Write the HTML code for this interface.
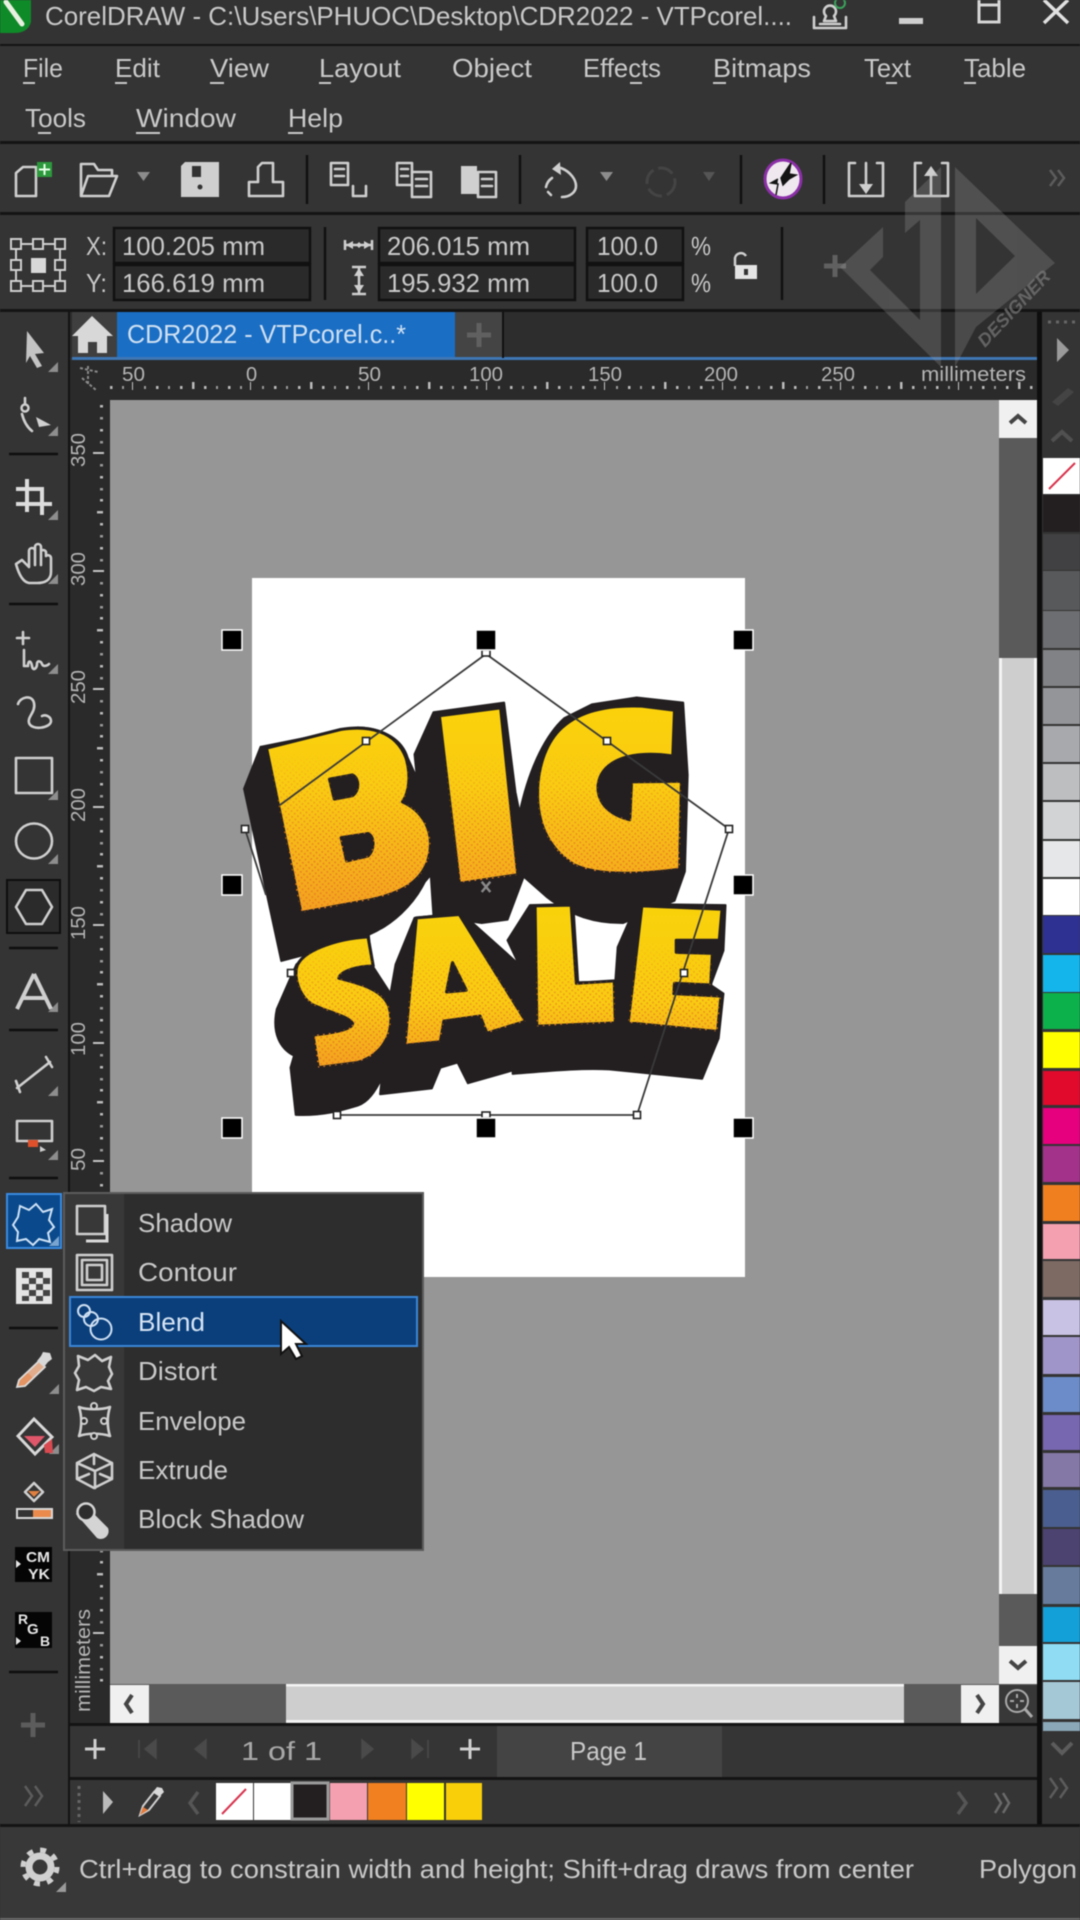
<!DOCTYPE html>
<html lang="en"><head><meta charset="utf-8"><title>CorelDRAW</title>
<style>
html,body{margin:0;padding:0;background:#343434;width:1080px;height:1920px;overflow:hidden}
svg{display:block;filter:blur(.6px)}
text{font-family:"Liberation Sans",sans-serif;fill:#c9c9c9;font-size:26px}
.ic{fill:none;stroke:#cfcfcf;stroke-width:2.6;stroke-linejoin:round;stroke-linecap:round}
.sm{font-size:20px;fill:#b5b5b5}
</style></head><body>
<svg xmlns="http://www.w3.org/2000/svg" width="1080" height="1920" viewBox="0 0 1080 1920">
<defs>
<linearGradient id="gb" gradientUnits="userSpaceOnUse" x1="0" y1="250" x2="0" y2="850"><stop offset="0" stop-color="#fbd20b"/><stop offset=".4" stop-color="#f9cb12"/><stop offset="1" stop-color="#f3a020"/></linearGradient>
<linearGradient id="gs" gradientUnits="userSpaceOnUse" x1="0" y1="830" x2="0" y2="1300"><stop offset="0" stop-color="#f9d20b"/><stop offset=".6" stop-color="#f9cb12"/><stop offset="1" stop-color="#f3a020"/></linearGradient>
<linearGradient id="fb" gradientUnits="userSpaceOnUse" x1="0" y1="380" x2="0" y2="700"><stop offset="0" stop-color="#000"/><stop offset=".4" stop-color="#777"/><stop offset="1" stop-color="#fff"/></linearGradient>
<linearGradient id="fs" gradientUnits="userSpaceOnUse" x1="0" y1="930" x2="0" y2="1230"><stop offset="0" stop-color="#000"/><stop offset=".4" stop-color="#888"/><stop offset="1" stop-color="#fff"/></linearGradient>
<mask id="mb" maskUnits="userSpaceOnUse" x="0" y="0" width="1600" height="1600"><rect width="1600" height="1600" fill="url(#fb)"/></mask>
<mask id="ms" maskUnits="userSpaceOnUse" x="0" y="0" width="1600" height="1600"><rect width="1600" height="1600" fill="url(#fs)"/></mask>
<pattern id="ht" patternUnits="userSpaceOnUse" width="17" height="17" patternTransform="rotate(-6)"><circle cx="4" cy="4" r="2.800" fill="#e97f22"/><circle cx="12.500" cy="12.500" r="2.800" fill="#e97f22"/></pattern>
<pattern id="rh" patternUnits="userSpaceOnUse" x="15" y="0" width="118" height="20"><rect x="117" y="0" width="2" height="10" fill="#c4c4c4"/><rect x="23" y="6" width="2.500" height="3" fill="#bbb"/><rect x="47" y="6" width="2.500" height="3" fill="#bbb"/><rect x="59" y="2" width="2.500" height="7" fill="#bbb"/><rect x="71" y="6" width="2.500" height="3" fill="#bbb"/><rect x="95" y="6" width="2.500" height="3" fill="#bbb"/><rect x="11" y="6" width="2" height="3" fill="#999"/><rect x="35" y="6" width="2" height="3" fill="#999"/><rect x="83" y="6" width="2" height="3" fill="#999"/><rect x="107" y="6" width="2" height="3" fill="#999"/></pattern>
<pattern id="rv" patternUnits="userSpaceOnUse" x="93" y="452" width="14" height="118"><rect x="0" y="0" width="11" height="2" fill="#c4c4c4"/><rect x="7" y="12" width="3" height="2.500" fill="#999"/><rect x="7" y="24" width="3" height="2.500" fill="#bbb"/><rect x="7" y="36" width="3" height="2.500" fill="#999"/><rect x="7" y="47" width="3" height="2.500" fill="#bbb"/><rect x="4" y="59" width="6" height="2.500" fill="#bbb"/><rect x="7" y="71" width="3" height="2.500" fill="#bbb"/><rect x="7" y="83" width="3" height="2.500" fill="#999"/><rect x="7" y="95" width="3" height="2.500" fill="#bbb"/><rect x="7" y="107" width="3" height="2.500" fill="#999"/></pattern>
<path id="lB" fill-rule="evenodd" d="M135 372L350 318C430 305 510 320 540 400C555 450 550 500 530 528C590 555 618 610 610 670C600 750 540 790 440 812L235 850ZM318 462L332 520L385 510C405 495 405 460 385 450ZM352 632L368 700L430 685C450 665 448 630 430 620Z"/>
<path id="lI" d="M637 278L815 255L865 740L695 765Z"/>
<path id="lG" d="M1320 262L1225 250C1100 245 1030 275 985 320C945 362 922 430 922 505C922 600 960 670 1030 712C1100 745 1230 738 1335 724L1340 468L1195 470L1190 580C1130 565 1095 530 1098 480C1105 420 1170 375 1315 395Z"/>
<path id="lS" d="M222 1010C235 960 340 925 430 920L445 1005C400 1005 350 1020 345 1040C400 1055 470 1070 490 1120C510 1190 480 1260 400 1285L285 1300L270 1205C320 1200 385 1190 385 1172C375 1150 300 1135 265 1115C235 1095 215 1050 222 1010Z"/>
<path id="lA" fill-rule="evenodd" d="M570 865L695 855L888 1165L775 1200L755 1150L650 1165L640 1225L537 1235ZM675 995L658 1080L715 1075Z"/>
<path id="lL" d="M915 830L1020 828L1035 1055L1145 1048L1148 1170L920 1180Z"/>
<path id="lE" d="M1225 830L1458 840L1450 930L1325 930L1325 965L1430 968L1425 1060L1320 1055L1318 1085L1455 1092L1445 1195L1185 1170Z"/>
</defs>

<rect width="1080" height="1920" fill="#343434"/>

<!-- title bar -->
<rect width="1080" height="44" fill="#333"/>
<path d="M0 0H31V22Q28 33 14 33H0Z" fill="#0f8a28"/>
<path d="M6 2L22 24" stroke="#e8f0e0" stroke-width="5" stroke-linecap="round"/>
<text x="45" y="25" textLength="747" lengthAdjust="spacingAndGlyphs">CorelDRAW - C:\Users\PHUOC\Desktop\CDR2022 - VTPcorel....</text>
<path class="ic" d="M814 17v11h32V17M820 24h20M826 16a6 6 0 1 1 8 0l2 5h-12z"/>
<circle cx="840" cy="3" r="5" fill="none" stroke="#3aa35a" stroke-width="2"/>
<rect x="899" y="18" width="24" height="6" fill="#cfcfcf"/>
<path d="M979 0V22H999V0M979 5H999" fill="none" stroke="#d5d5d5" stroke-width="3"/>
<path d="M1044 0L1068 23M1068 0L1044 23" stroke="#e0e0e0" stroke-width="3.500"/>
<rect y="44" width="1080" height="2" fill="#141414"/>

<!-- menu -->
<text x="23" y="77" textLength="40" lengthAdjust="spacingAndGlyphs">File</text>
<text x="115" y="77" textLength="45" lengthAdjust="spacingAndGlyphs">Edit</text>
<text x="210" y="77" textLength="59" lengthAdjust="spacingAndGlyphs">View</text>
<text x="319" y="77" textLength="82" lengthAdjust="spacingAndGlyphs">Layout</text>
<text x="452" y="77" textLength="80" lengthAdjust="spacingAndGlyphs">Object</text>
<text x="583" y="77" textLength="78" lengthAdjust="spacingAndGlyphs">Effects</text>
<text x="713" y="77" textLength="98" lengthAdjust="spacingAndGlyphs">Bitmaps</text>
<text x="864" y="77" textLength="47" lengthAdjust="spacingAndGlyphs">Text</text>
<text x="964" y="77" textLength="62" lengthAdjust="spacingAndGlyphs">Table</text>
<text x="25" y="127" textLength="61" lengthAdjust="spacingAndGlyphs">Tools</text>
<text x="136" y="127" textLength="100" lengthAdjust="spacingAndGlyphs">Window</text>
<text x="288" y="127" textLength="55" lengthAdjust="spacingAndGlyphs">Help</text>
<g fill="#c9c9c9">
<rect x="23" y="82" width="12" height="2"/><rect x="115" y="82" width="12" height="2"/><rect x="210" y="82" width="14" height="2"/><rect x="319" y="82" width="12" height="2"/><rect x="630" y="82" width="12" height="2"/><rect x="713" y="82" width="13" height="2"/><rect x="886" y="82" width="11" height="2"/><rect x="964" y="82" width="12" height="2"/>
<rect x="38" y="132" width="13" height="2"/><rect x="136" y="132" width="24" height="2"/><rect x="288" y="132" width="15" height="2"/>
</g>
<rect y="141" width="1080" height="3" fill="#141414"/>

<!-- standard toolbar -->
<path class="ic" d="M16 196V173l7-6h13v29z"/>
<rect x="37" y="162" width="15" height="15" fill="#2c9a3c"/><path d="M44.500 164v11M39 169.500h11" stroke="#e8ffe8" stroke-width="2"/>
<path class="ic" d="M81 196V164h13l4 6h14v6M81 196l7-20h29l-8 20z"/>
<path d="M137 172h13l-6.500 9z" fill="#8c8c8c"/>
<path d="M181 166l4-4h34v35h-38z" fill="#cfcfcf"/><rect x="192" y="166" width="9" height="11" fill="#333"/><circle cx="200" cy="187" r="2.500" fill="#333"/>
<path class="ic" d="M249 196v-14h9v-15l4-4h11v19h10v14z"/>
<path d="M307 155V204M520 155V204M741 155V204M824 155V204" stroke="#111" stroke-width="2.500"/>
<path class="ic" stroke-width="2" d="M331 163h17v22h-17zM335 169h9M335 176h9M353 186v10h13v-10"/>
<path class="ic" d="M397 163h15v22h-15zM412 172h19v25h-19zM401 169h7M401 176h7M416 179h11M416 186h11"/>
<path d="M461 166h16v28h-16z" fill="#cfcfcf"/><path class="ic" d="M478 172h18v25h-18zM482 179h10M482 186h10"/>
<path class="ic" d="M561 168c10 4 15 12 15 18 0 6-6 11-14 11M552 178a14 14 0 0 0-6 9M548 192l3 3"/>
<path d="M560 162l-8 7 9 6z" fill="#cfcfcf"/>
<path d="M600 172h13l-6.500 9z" fill="#8c8c8c"/>
<circle cx="661" cy="182" r="14" fill="none" stroke="#444" stroke-width="3" stroke-dasharray="16 5"/>
<path d="M703 172h12l-6 9z" fill="#555"/>
<ellipse cx="783" cy="179" rx="18" ry="19" fill="#efe9ef" stroke="#8c2fa8" stroke-width="3"/>
<path d="M791 163l-2 11 7 1-7 4-6 6-2-7zM776 195l2-11-7-1 7-4" fill="#141414" stroke="#141414" stroke-width="1.500"/>
<path class="ic" d="M849 163v33h34v-33h-6M855 163h-6M866 163v24"/><path d="M859 184h14l-7 10z" fill="#cfcfcf"/>
<path class="ic" d="M915 163v33h33v-33h-6M921 163h-6M931 196v-22"/><path d="M924 176h14l-7-10z" fill="#cfcfcf"/>
<path d="M1050 170l6 8-6 8M1058 170l6 8-6 8" fill="none" stroke="#5c5c5c" stroke-width="2.500"/>
<rect y="212" width="1080" height="3" fill="#141414"/>

<!-- property bar -->
<g fill="none" stroke="#cfcfcf" stroke-width="2">
<rect x="11" y="239" width="10" height="10"/><rect x="33" y="239" width="10" height="10"/><rect x="55" y="239" width="10" height="10"/>
<rect x="11" y="260" width="10" height="10"/><rect x="55" y="260" width="10" height="10"/>
<rect x="11" y="281" width="10" height="10"/><rect x="33" y="281" width="10" height="10"/><rect x="55" y="281" width="10" height="10"/>
<path d="M21 244h12M43 244h12M21 286h12M43 286h12M16 249v11M60 249v11M16 270v11M60 270v11"/>
</g>
<rect x="31" y="258" width="15" height="15" fill="#d8d8d8"/>
<text x="86" y="255" textLength="21" lengthAdjust="spacingAndGlyphs">X:</text>
<text x="86" y="292" textLength="21" lengthAdjust="spacingAndGlyphs">Y:</text>
<g fill="#2a2a2a" stroke="#111" stroke-width="2.500">
<rect x="114" y="228" width="196" height="35"/><rect x="114" y="265" width="196" height="35"/>
<rect x="379" y="228" width="196" height="35"/><rect x="379" y="265" width="196" height="35"/>
<rect x="587" y="228" width="96" height="35"/><rect x="587" y="265" width="96" height="35"/>
</g>
<text x="122" y="255" textLength="143" lengthAdjust="spacingAndGlyphs">100.205 mm</text>
<text x="122" y="292" textLength="143" lengthAdjust="spacingAndGlyphs">166.619 mm</text>
<text x="387" y="255" textLength="143" lengthAdjust="spacingAndGlyphs">206.015 mm</text>
<text x="387" y="292" textLength="143" lengthAdjust="spacingAndGlyphs">195.932 mm</text>
<text x="597" y="255" textLength="61" lengthAdjust="spacingAndGlyphs">100.0</text>
<text x="597" y="292" textLength="61" lengthAdjust="spacingAndGlyphs">100.0</text>
<text x="691" y="255" textLength="20" lengthAdjust="spacingAndGlyphs">%</text>
<text x="691" y="292" textLength="20" lengthAdjust="spacingAndGlyphs">%</text>
<path d="M325 227V300M782 227V300" stroke="#111" stroke-width="2.500"/>
<path d="M345 240v10M372 240v10M345 245h27" stroke="#cfcfcf" stroke-width="2.500"/><path d="M346 245l7-4v8zM371 245l-7-4v8zM356 245l3-3 3 3-3 3z" fill="#cfcfcf"/>
<path d="M352 267h14M352 294h14M359 267v27" stroke="#cfcfcf" stroke-width="2.500"/><path d="M359 268l-5 8h10zM359 293l-5-8h10z" fill="#cfcfcf"/>
<path d="M735 266v-8a6 6 0 0 1 11-2" fill="none" stroke="#cfcfcf" stroke-width="2.500"/>
<rect x="735" y="265" width="22" height="14" fill="#e4e4e4"/><rect x="744" y="269" width="4" height="6" fill="#333"/>
<path d="M835 255v22M824 266h22" stroke="#606060" stroke-width="5"/>
<rect y="309" width="1080" height="3" fill="#141414"/>

<!-- left toolbox bg + tab strip -->
<rect x="0" y="312" width="68" height="1513" fill="#343434"/>
<rect x="70" y="312" width="967" height="46" fill="#2d2d2d"/>
<rect x="72" y="312" width="45" height="46" fill="#3f3f3f"/>
<path d="M72 336l20-20 21 20h-6v17h-10v-11h-9v11H78v-17z" fill="#d8d8d8"/>
<rect x="117" y="312" width="338" height="46" fill="#1a6ec4"/>
<text x="127" y="343" textLength="279" lengthAdjust="spacingAndGlyphs" style="fill:#cfe0f2">CDR2022 - VTPcorel.c..*</text>
<rect x="455" y="312" width="48" height="46" fill="#444"/>
<path d="M479 323v24M467 335h24" stroke="#606060" stroke-width="5"/>
<rect x="72" y="357" width="965" height="3" fill="#3f76b4"/>
<rect x="502" y="312" width="2" height="46" fill="#111"/>
<rect x="68" y="312" width="2" height="1513" fill="#131313"/>

<!-- rulers -->
<rect x="70" y="360" width="967" height="40" fill="#2a2a2a"/>
<rect x="70" y="360" width="40" height="1365" fill="#2a2a2a"/>
<rect x="110" y="382" width="927" height="11" fill="url(#rh)"/>
<rect x="93" y="400" width="14" height="1285" fill="url(#rv)"/>
<text class="sm" x="122" y="381" textLength="23" lengthAdjust="spacingAndGlyphs">50</text>
<text class="sm" x="246" y="381">0</text>
<text class="sm" x="358" y="381" textLength="23" lengthAdjust="spacingAndGlyphs">50</text>
<text class="sm" x="469" y="381" textLength="34" lengthAdjust="spacingAndGlyphs">100</text>
<text class="sm" x="588" y="381" textLength="34" lengthAdjust="spacingAndGlyphs">150</text>
<text class="sm" x="704" y="381" textLength="34" lengthAdjust="spacingAndGlyphs">200</text>
<text class="sm" x="821" y="381" textLength="34" lengthAdjust="spacingAndGlyphs">250</text>
<text class="sm" x="921" y="381" textLength="105" lengthAdjust="spacingAndGlyphs">millimeters</text>
<path d="M80 368l18 4M88 366v20M82 378l14 12" stroke="#8a8a8a" stroke-width="2" fill="none" stroke-dasharray="3 2"/>
<text class="sm" transform="translate(85,467) rotate(-90)" textLength="34" lengthAdjust="spacingAndGlyphs">350</text>
<text class="sm" transform="translate(85,586) rotate(-90)" textLength="34" lengthAdjust="spacingAndGlyphs">300</text>
<text class="sm" transform="translate(85,704) rotate(-90)" textLength="34" lengthAdjust="spacingAndGlyphs">250</text>
<text class="sm" transform="translate(85,822) rotate(-90)" textLength="34" lengthAdjust="spacingAndGlyphs">200</text>
<text class="sm" transform="translate(85,940) rotate(-90)" textLength="34" lengthAdjust="spacingAndGlyphs">150</text>
<text class="sm" transform="translate(85,1056) rotate(-90)" textLength="34" lengthAdjust="spacingAndGlyphs">100</text>
<text class="sm" transform="translate(85,1171) rotate(-90)" textLength="23" lengthAdjust="spacingAndGlyphs">50</text>
<text class="sm" transform="translate(90,1712) rotate(-90)" textLength="103" lengthAdjust="spacingAndGlyphs">millimeters</text>

<!-- canvas -->
<rect x="110" y="400" width="889" height="1285" fill="#969696"/>
<rect x="252" y="578" width="493" height="699" fill="#fff"/>

<!-- BIG SALE art -->
<g transform="translate(220,620) scale(.34435)">
<g fill="#231f20" stroke="#231f20" stroke-width="6" stroke-linejoin="round">
<path d="M118 368L70 490L178 990L235 975C300 965 350 950 430 915C500 885 560 830 595 760L612 740L620 860L760 880L835 870L882 745L950 805C1020 860 1090 880 1170 880L1320 815L1350 730L1358 450L1345 240L1210 225L1080 245L1000 285C950 330 900 420 870 560L858 500L825 240L620 268L565 390L572 460L545 400C530 350 480 315 400 312L120 368Z"/>
<path d="M222 1000L165 1130C150 1200 175 1245 215 1265L205 1300L220 1437C300 1440 350 1425 400 1410C430 1400 450 1370 470 1330L465 1377L615 1360L640 1300L690 1285L720 1345L850 1308V1318C950 1310 1050 1300 1130 1305L1400 1332L1448 1215L1462 1085L1425 1060L1462 960L1468 828L1210 825L1155 950L1148 1050L1040 1052L1026 825L900 828L835 930L868 1000L700 850L565 865L510 1000L495 1085L440 1000L432 915L290 940Z"/>
</g>
<g stroke="#231f20" stroke-width="9" stroke-linejoin="round">
<use href="#lB" fill="url(#gb)"/><use href="#lI" fill="url(#gb)"/><use href="#lG" fill="url(#gb)"/>
<use href="#lS" fill="url(#gs)"/><use href="#lA" fill="url(#gs)"/><use href="#lL" fill="url(#gs)"/><use href="#lE" fill="url(#gs)"/>
</g>
<g fill="url(#ht)" mask="url(#mb)"><use href="#lB"/><use href="#lI"/><use href="#lG"/></g>
<g fill="url(#ht)" mask="url(#ms)"><use href="#lS"/><use href="#lA"/><use href="#lL"/><use href="#lE"/></g>
<path d="M760 760L785 790M785 760L760 790" stroke="#8a8a8a" stroke-width="7"/>
</g>

<!-- polygon selection -->
<g fill="none" stroke="#3a3a3a" stroke-width="1.800">
<path d="M486 654L280 805"/><path d="M486 654L729 829L637 1115L337 1115"/><path d="M245 829L266 895"/>
</g>
<g fill="#fff" stroke="#222" stroke-width="1.600">
<rect x="482" y="650" width="8" height="6"/><rect x="362.500" y="737.500" width="7" height="7"/><rect x="603.500" y="737.500" width="7" height="7"/><rect x="725.500" y="825.500" width="7" height="7"/><rect x="241.500" y="825.500" width="7" height="7"/><rect x="287.500" y="969.500" width="7" height="7"/><rect x="680.500" y="969.500" width="7" height="7"/><rect x="333.500" y="1111.500" width="7" height="7"/><rect x="633.500" y="1111.500" width="7" height="7"/><rect x="482" y="1112" width="8" height="6"/>
</g>
<g fill="#000" stroke="#fff" stroke-width="1.500">
<rect x="222" y="630" width="20" height="20"/><rect x="476" y="630" width="20" height="20"/><rect x="733" y="630" width="20" height="20"/>
<rect x="222" y="875" width="20" height="20"/><rect x="733" y="875" width="20" height="20"/>
<rect x="222" y="1118" width="20" height="20"/><rect x="476" y="1118" width="20" height="20"/><rect x="733" y="1118" width="20" height="20"/>
</g>

<!-- scrollbars -->
<rect x="999" y="400" width="38" height="1285" fill="#5a5a5a"/>
<rect x="999" y="400" width="38" height="38" fill="#f0f0f0"/>
<path d="M1010 423l8-7 8 7" fill="none" stroke="#444" stroke-width="4"/>
<rect x="999" y="658" width="38" height="936" fill="#cecece"/><rect x="999" y="658" width="3" height="936" fill="#f4f4f4"/><rect x="1034" y="658" width="3" height="936" fill="#f4f4f4"/>
<rect x="999" y="1646" width="38" height="38" fill="#f0f0f0"/>
<path d="M1010 1661l8 7 8-7" fill="none" stroke="#444" stroke-width="4"/>
<rect x="110" y="1684" width="889" height="39" fill="#5a5a5a"/>
<rect x="110" y="1685" width="39" height="38" fill="#f0f0f0"/>
<path d="M132 1695l-6 9 6 9" fill="none" stroke="#444" stroke-width="4"/>
<rect x="286" y="1684" width="618" height="39" fill="#cecece"/><rect x="286" y="1684" width="618" height="2.500" fill="#f4f4f4"/><rect x="286" y="1720" width="618" height="2.500" fill="#f4f4f4"/>
<rect x="961" y="1685" width="38" height="38" fill="#f0f0f0"/>
<path d="M977 1695l6 9-6 9" fill="none" stroke="#444" stroke-width="4"/>
<rect x="999" y="1685" width="38" height="38" fill="#383838"/>
<circle cx="1017" cy="1701" r="11" fill="none" stroke="#aaa" stroke-width="2"/><path d="M1025 1709l7 8" stroke="#aaa" stroke-width="3"/><path d="M1017 1694v4M1017 1704v4M1010 1701h4M1020 1701h4" stroke="#aaa" stroke-width="2"/>
<rect x="70" y="1723" width="967" height="3" fill="#141414"/>

<!-- watermark -->
<g fill="#a8a8a8" opacity=".24">
<path d="M883 227L840 267L941 367V167L905 202V233L920 220V320L870 270L883 257Z"/>
<path fill-rule="evenodd" d="M955 167L1055 263L976 327L955 367ZM976 218V294L1015 256Z"/>
</g>
<text transform="translate(985,348) rotate(-46.600)" style="font-size:18px;font-style:italic;font-weight:bold;fill:#7a7a7a" opacity=".7" textLength="97" lengthAdjust="spacingAndGlyphs">DESIGNER</text>

<!-- palette panel -->
<rect x="1037" y="312" width="5" height="1513" fill="#0e0e0e"/>
<rect x="1042" y="312" width="38" height="1513" fill="#343434"/>
<path d="M1048 322h32" stroke="#666" stroke-width="3" stroke-dasharray="3 5"/>
<path d="M1057 338l12 12-12 12z" fill="#9a9a9a"/>
<path d="M1052 402l16-14 6 4-16 14z" fill="#444"/>
<path d="M1052 441l10-9 10 9" fill="none" stroke="#505050" stroke-width="4"/>
<rect x="1043" y="458" width="37" height="36" fill="#fff"/><path d="M1049 489l26-26" stroke="#d8344f" stroke-width="2"/>
<rect x="1043" y="495" width="37" height="37" fill="#231f20"/><rect x="1043" y="534" width="37" height="36" fill="#414042"/><rect x="1043" y="571" width="37" height="39" fill="#58595b"/><rect x="1043" y="611" width="37" height="37" fill="#6d6e71"/><rect x="1043" y="650" width="37" height="36" fill="#808285"/><rect x="1043" y="688" width="37" height="36" fill="#939598"/><rect x="1043" y="726" width="37" height="36" fill="#a7a9ac"/><rect x="1043" y="764" width="37" height="36" fill="#bcbec0"/><rect x="1043" y="802" width="37" height="37" fill="#d1d3d4"/><rect x="1043" y="841" width="37" height="36" fill="#e6e7e8"/><rect x="1043" y="879" width="37" height="36" fill="#fff"/><rect x="1043" y="916" width="37" height="37" fill="#2e3192"/><rect x="1043" y="955" width="37" height="37" fill="#13b5ea"/><rect x="1043" y="993" width="37" height="36" fill="#0db14b"/>
<rect x="1043" y="1032" width="37" height="36" fill="#ffff00"/><rect x="1043" y="1071" width="37" height="34" fill="#e10a2c"/><rect x="1043" y="1108" width="37" height="36" fill="#e6007e"/><rect x="1043" y="1146" width="37" height="36" fill="#a3338a"/><rect x="1043" y="1185" width="37" height="36" fill="#f07f20"/><rect x="1043" y="1224" width="37" height="35" fill="#f4a0b0"/><rect x="1043" y="1261" width="37" height="36" fill="#7c6a63"/><rect x="1043" y="1300" width="37" height="35" fill="#c8c2e4"/><rect x="1043" y="1337" width="37" height="37" fill="#a095c8"/><rect x="1043" y="1377" width="37" height="35" fill="#6b8cc8"/><rect x="1043" y="1415" width="37" height="35" fill="#7766b0"/><rect x="1043" y="1453" width="37" height="34" fill="#8478a6"/><rect x="1043" y="1490" width="37" height="37" fill="#4a5f8f"/><rect x="1043" y="1529" width="37" height="36" fill="#4c4370"/><rect x="1043" y="1567" width="37" height="37" fill="#677c9c"/><rect x="1043" y="1607" width="37" height="35" fill="#13a0d8"/><rect x="1043" y="1644" width="37" height="36" fill="#90dcf2"/><rect x="1043" y="1682" width="37" height="37" fill="#a5c8d6"/><rect x="1043" y="1722" width="37" height="9" fill="#8aa8b8"/>
<path d="M1052 1743l10 10 10-10" fill="none" stroke="#5c5c5c" stroke-width="4"/>
<path d="M1050 1778l7 10-7 10M1060 1778l7 10-7 10" fill="none" stroke="#5c5c5c" stroke-width="2.500"/>

<!-- page nav -->
<rect x="70" y="1726" width="967" height="51" fill="#353535"/>
<rect x="497" y="1726" width="225" height="51" fill="#444"/>
<path d="M95 1739v20M85 1749h20M470 1739v20M460 1749h20" stroke="#cfcfcf" stroke-width="3"/>
<path d="M139 1740v18M156 1740l-11 9 11 9zM206 1740l-11 9 11 9zM362 1740l11 9-11 9zM412 1740l11 9-11 9zM428 1740v18" fill="#4a4a4a" stroke="#4a4a4a" stroke-width="1.500"/>
<text x="241" y="1760" textLength="81" lengthAdjust="spacingAndGlyphs" style="fill:#a8a8a8">1 of 1</text>
<text x="570" y="1760" textLength="77" lengthAdjust="spacingAndGlyphs">Page 1</text>
<rect x="70" y="1777" width="967" height="3" fill="#141414"/>

<!-- document palette -->
<rect x="70" y="1780" width="967" height="44" fill="#353535"/>
<path d="M79 1786v36" stroke="#666" stroke-width="3" stroke-dasharray="3 4"/>
<path d="M103 1791l10 11-10 12z" fill="#bbb"/>
<path d="M140 1815l3-9 11-14 6 4-11 14z" fill="none" stroke="#cfcfcf" stroke-width="2"/><path d="M140 1815l3-8 5 3z" fill="#e47a3a"/><path d="M153 1792l4-5 5 1 2 4-4 4z" fill="#d8d8d8"/>
<path d="M198 1792l-8 11 8 11M958 1792l8 11-8 11" fill="none" stroke="#565656" stroke-width="3.500"/>
<path d="M995 1793l6 10-6 10M1003 1793l6 10-6 10" fill="none" stroke="#6a6a6a" stroke-width="2.500"/>
<rect x="216" y="1783" width="37" height="37" fill="#fff"/><path d="M222 1814l24-25" stroke="#d8344f" stroke-width="2"/>
<rect x="254" y="1783" width="37" height="37" fill="#fff"/>
<rect x="292" y="1783" width="36" height="36" fill="#231f20" stroke="#9a9a9a" stroke-width="3"/>
<rect x="330" y="1783" width="37" height="37" fill="#f4a0b0"/>
<rect x="368" y="1783" width="38" height="37" fill="#f08020"/>
<rect x="407" y="1783" width="37" height="37" fill="#ffff00"/>
<rect x="446" y="1783" width="36" height="37" fill="#f9cf0a"/>
<rect y="1824" width="1080" height="3" fill="#141414"/>

<!-- status bar -->
<rect y="1827" width="1080" height="91" fill="#383838"/>
<rect y="1918" width="1080" height="2" fill="#6a6a6a"/>
<circle cx="40" cy="1867" r="11" fill="none" stroke="#d0d0d0" stroke-width="7"/>
<circle cx="40" cy="1867" r="17" fill="none" stroke="#d0d0d0" stroke-width="5" stroke-dasharray="6 7.350"/>
<path d="M66 1882v10h-10z" fill="#9a9a9a"/>
<text x="79" y="1878" textLength="835" lengthAdjust="spacingAndGlyphs">Ctrl+drag to constrain width and height; Shift+drag draws from center</text>
<text x="979" y="1878" textLength="98" lengthAdjust="spacingAndGlyphs">Polygon</text>

<!-- toolbox icons -->
<path d="M27 331l17 22-9 1 7 12-5 2-7-12-4 7z" fill="#c4c4c4"/>
<path d="M58 362v10H48zM58 426v10H48zM58 510v10H48zM58 574v10H48zM58 664v10H48zM58 790v10H48zM58 854v10H48zM58 922v10H48zM58 1002v10H48zM58 1086v10H48zM58 1150v10H48zM58 1238v10H48z" fill="#8e8e8e"/>
<path d="M9 454H58M9 604H58M9 948H58M9 1030H58M9 1178H58M9 1328H58M9 1672H58" stroke="#0e0e0e" stroke-width="2.500"/>
<circle cx="25" cy="408" r="3.500" fill="none" stroke="#d0d0d0" stroke-width="2.500"/><path class="ic" d="M25 398v6M22 414c2 8 5 13 10 17"/><path d="M36 417l15 8-12 2z" fill="#d0d0d0"/>
<path d="M27 479v33M16 489h26v22M16 504h36M42 500v15" fill="none" stroke="#dcdcdc" stroke-width="4"/>
<path class="ic" d="M16 564l6-4 7 7v-16a3 3 0 0 1 6 0v-4a3 3 0 0 1 6 0v4a3 3 0 0 1 5 1v4a3 3 0 0 1 5 2v14c0 8-6 11-14 11h-8c-6-1-10-8-13-19zM29 559v7M35 552v13M41 552v13"/>
<path class="ic" stroke-width="2.200" d="M23 632v12M17 638h12M24 650v16h4c0-6 3-6 4 0s5 2 5-2 4-3 5 0 5 2 7 0"/>
<path class="ic" stroke-width="3" d="M18 704c2-7 14-10 16-1s-7 14-5 20c3 8 22 5 22-2 0-4-5-7-9-5"/>
<rect x="16" y="758" width="36" height="35" class="ic"/>
<ellipse cx="34" cy="841" rx="18" ry="17.500" class="ic"/>
<rect x="7" y="880" width="53" height="53" fill="#2b2b2b" stroke="#0e0e0e" stroke-width="2"/>
<path class="ic" d="M26 890h16l10 17-10 17H26l-10-17z"/>
<path d="M34 974L17 1009M34 974L51 1009M23 998H45" fill="none" stroke="#cfcfcf" stroke-width="4"/>
<path class="ic" d="M17 1088L50 1062M16 1081l4 11M46 1057l6 10"/>
<path class="ic" d="M17 1121h35v20H17z"/><rect x="28" y="1140" width="10" height="7" fill="#e0502a"/><path d="M40 1146l6 4-6 2z" fill="#cfcfcf"/>
<rect x="7" y="1194" width="54" height="54" fill="#0a4a8c" stroke="#3a8ae0" stroke-width="2"/>
<path d="M20 1206l9 4 7-6 7 8 9-3-3 11 5 7-6 6 2 9-11-3-6 6-7-6-9 2 1-9-5-7 5-8z" fill="none" stroke="#cfe2f6" stroke-width="2"/>
<path d="M59 1236v10H49z" fill="#7aa4d0"/>
<rect x="16" y="1268" width="36" height="36" fill="#e4e4e4"/>
<g fill="#444"><rect x="22" y="1272" width="7" height="6"/><rect x="36" y="1272" width="7" height="6"/><rect x="29" y="1278" width="7" height="6"/><rect x="43" y="1278" width="7" height="6"/><rect x="22" y="1284" width="7" height="6"/><rect x="36" y="1284" width="7" height="6"/><rect x="29" y="1290" width="7" height="6"/><rect x="43" y="1290" width="7" height="6"/><rect x="22" y="1296" width="7" height="5"/><rect x="36" y="1296" width="7" height="5"/></g>
<path d="M17 1387l2-7 20-19 6 6-20 19z" fill="#e49362" stroke="#dcdcdc" stroke-width="1.800"/><path d="M27 1372l12-11 6 6-12 11z" fill="#dcdcdc" opacity=".35"/><path d="M37 1361l4-5 2-4 7 1 2 6-4 3-4 5z" fill="#d8d8d8"/>
<path d="M59 1384v10H49zM59 1444v10H49z" fill="#8e8e8e"/>
<path d="M18 1436l16-17 18 18-17 17z" fill="none" stroke="#d8d8d8" stroke-width="3"/><path d="M24 1436h21l-10 11z" fill="#e0566a"/><path d="M44 1445l8-6 1 14h-8z" fill="#d84a50"/>
<path class="ic" stroke-width="2.200" d="M34 1483l9 9-9 9-9-9z"/><path d="M28 1491h12l-6 6z" fill="#e08040"/>
<rect x="17" y="1509" width="35" height="9" fill="none" stroke="#d8d8d8" stroke-width="2"/><rect x="33" y="1510" width="18" height="7" fill="#ea8a4c"/>
<rect x="15" y="1547" width="37" height="35" fill="#050505"/>
<text x="26" y="1562" style="font-size:15px;font-weight:bold;fill:#e6e6e6" textLength="24" lengthAdjust="spacingAndGlyphs">CM</text>
<text x="28" y="1579" style="font-size:15px;font-weight:bold;fill:#e6e6e6" textLength="22" lengthAdjust="spacingAndGlyphs">YK</text>
<path d="M16 1560l5 4-5 4z" fill="#e6e6e6"/>
<rect x="15" y="1612" width="37" height="36" fill="#050505"/>
<text x="18" y="1624" style="font-size:14px;font-weight:bold;fill:#e6e6e6">R</text>
<text x="27" y="1634" style="font-size:15px;font-weight:bold;fill:#e6e6e6">G</text>
<text x="40" y="1646" style="font-size:14px;font-weight:bold;fill:#e6e6e6">B</text>
<path d="M16 1637l5 4-5 4z" fill="#e6e6e6"/>
<path d="M33 1713v24M21 1725h24" stroke="#5c5c5c" stroke-width="5"/>
<path d="M25 1786l7 10-7 10M35 1786l7 10-7 10" fill="none" stroke="#5c5c5c" stroke-width="2.500"/>

<!-- flyout menu -->
<rect x="64" y="1193" width="359" height="357" fill="#2d2d2d" stroke="#5c5c5c" stroke-width="2"/>
<rect x="65" y="1194" width="59" height="355" fill="#383838"/>
<rect x="70" y="1297" width="347" height="49" fill="#0a3f7c" stroke="#3a86d8" stroke-width="2"/>
<rect x="77" y="1206" width="28" height="28" class="ic"/><path d="M107 1214v27H86" fill="none" stroke="#d8d8d8" stroke-width="3"/>
<rect x="77" y="1255" width="35" height="35" class="ic" stroke-width="2"/><rect x="82" y="1260" width="25" height="25" class="ic" stroke-width="2"/><rect x="87" y="1265" width="15" height="15" class="ic" stroke-width="2"/>
<circle cx="84" cy="1311" r="6" fill="none" stroke="#cfe0f2" stroke-width="2"/><circle cx="91" cy="1319" r="7" fill="none" stroke="#cfe0f2" stroke-width="2"/><circle cx="101" cy="1329" r="10.500" fill="none" stroke="#cfe0f2" stroke-width="2"/>
<path d="M78 1356l10 4 7-5 7 6 9-4-2 10 3 7-4 7 3 8-10-2-7 4-8-4-9 3 2-10-4-7 4-7z" class="ic" stroke-width="2"/>
<path class="ic" stroke-width="2" d="M79 1407c8 3 22 3 31 0-3 9-3 20 0 29-9-3-23-3-31 0 3-9 3-20 0-29z"/>
<g fill="#2d2d2d" stroke="#cfcfcf" stroke-width="2"><circle cx="94" cy="1406" r="3"/><circle cx="94" cy="1436" r="3"/><circle cx="84" cy="1421" r="3"/><circle cx="104" cy="1421" r="3"/></g>
<path class="ic" stroke-width="2" d="M94 1454l18 9v16l-18 9-17-9v-16zM77 1463l18 8 17-8M95 1471v17M77 1479l12-5M112 1479l-12-5M94 1454v10"/>
<path d="M84 1504l24 24a8 8 0 0 1-2 9 8 8 0 0 1-9 1l-21-24z" fill="#d4d4d4"/><circle cx="86" cy="1512" r="8.500" fill="#2d2d2d" stroke="#d4d4d4" stroke-width="2.500"/>
<text x="138" y="1232" textLength="94" lengthAdjust="spacingAndGlyphs">Shadow</text>
<text x="138" y="1281" textLength="99" lengthAdjust="spacingAndGlyphs">Contour</text>
<text x="138" y="1331" textLength="67" lengthAdjust="spacingAndGlyphs" style="fill:#d6e4f4">Blend</text>
<text x="138" y="1380" textLength="79" lengthAdjust="spacingAndGlyphs">Distort</text>
<text x="138" y="1430" textLength="108" lengthAdjust="spacingAndGlyphs">Envelope</text>
<text x="138" y="1479" textLength="90" lengthAdjust="spacingAndGlyphs">Extrude</text>
<text x="138" y="1528" textLength="166" lengthAdjust="spacingAndGlyphs">Block Shadow</text>

<!-- cursor -->
<path d="M281 1321V1354L289 1347L296 1359L302 1356L296 1344L306 1344Z" fill="#fff" stroke="#111" stroke-width="2"/>
</svg>
</body></html>
